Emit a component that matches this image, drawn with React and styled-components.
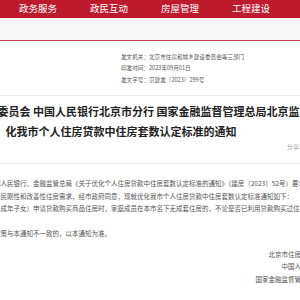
import React from 'react'
import styled, { createGlobalStyle } from 'styled-components';

const Global = createGlobalStyle`
  html, body {
    margin: 0;
    padding: 0;
    overflow: hidden;
    background: #fff;
  }
  body {
    font-family: "Noto Sans CJK SC", "Noto Sans", sans-serif;
  }
  #root {
    width: 300px;
    height: 300px;
    overflow: hidden;
  }
`

const navItems = ['政务服务', '政民互动', '房屋管理', '工程建设']

const metaItems = [
  ['发文机关', '北京市住房和城乡建设委员会等三部门'],
  ['印发时间', '2023年09月01日'],
  ['发文字号', '京建发〔2023〕299号'],
]

// the lines as they wrap in the page column
const lines = [
  { indent: true, text: '认真贯彻落实住房和城乡建设部、中国人民银行、金融监管总局《关于优化个人住房贷款中住房套数认定标准的通知》（建房〔2023〕52号）要求，为' },
  { text: '促进房地产市场平稳健康发展，更好满足居民刚性和改善性住房需求，经市政府同意，现就优化我市个人住房贷款中住房套数认定标准通知如下：' },
  { indent: true, text: '一、居民家庭（包括借款人、配偶及未成年子女）申请贷款购买商品住房时，家庭成员在本市名下无成套住房的，不论是否已利用贷款购买过住房，银行业金融机' },
  { text: '构均按首套住房执行住房信贷政策。' },
  { indent: true, text: '二、本通知自印发之日起施行。此前政策与本通知不一致的，以本通知为准。' },
]

const signers = [
  '北京市住房和城乡建设委员会',
  '中国人民银行北京市分行',
  '国家金融监督管理总局北京监管局',
]

const App = () => {
  return (
    <>
      <Global />
      <NavBar>
        {navItems.map(item => <NavItem key={item}>{item}</NavItem>)}
      </NavBar>
      <SubBar />
      <Article>
        <Meta>
          {metaItems.map(([label, value]) => (
            <MetaLine key={label}>{label}：{value}</MetaLine>
          ))}
        </Meta>
        <Title>
          北京市住房和城乡建设委员会 中国人民银行北京市分行 国家金融监督管理总局北京监管局关于优化我市个人住房贷款中住房套数认定标准的通知
        </Title>
        <ShareRow>分享到：<span>微信 微博</span></ShareRow>
        <Body>
          {lines.map(l => <Line key={l.text} $indent={l.indent}>{l.text}</Line>)}
          <Signers>
            {signers.map(s => <Signer key={s}>{s}</Signer>)}
          </Signers>
        </Body>
      </Article>
    </>
  )
}

export default App

const NavBar = styled.div`
  height: 18px;
  background: #be1a2e;
  display: flex;
  align-items: center;
  gap: 33px;
  padding-left: 19px;
`

const NavItem = styled.div`
  color: #fff;
  font-size: 9.5px;
  line-height: 1;
  white-space: nowrap;
`

const SubBar = styled.div`
  height: 22px;
  background: #f6f6f6;
  border-bottom: 1px solid #c9404f;
`

const Article = styled.div`
  width: 722px;
  margin-left: -240px;
`

const Meta = styled.div`
  padding: 11px 0 9px 361px;
  border-bottom: 1px solid #eeeeee;
`

const MetaLine = styled.div`
  font-size: 5.6px;
  line-height: 11.4px;
  color: #555;
  white-space: nowrap;
`

const Title = styled.h1`
  margin: 0;
  font-size: 11px;
  line-height: 20px;
  font-weight: 700;
  color: #222;
  text-align: center;
  padding: 5px 124px 0;
`

const ShareRow = styled.div`
  padding: 1px 0 0 527px;
  height: 21px;
  font-size: 6px;
  line-height: 10px;
  color: #999;
  border-bottom: 1px solid #eeeeee;
  white-space: nowrap;
`

const Body = styled.div`
  padding: 13px 129px 0 117px;
`

const Line = styled.div`
  font-size: 6.5px;
  line-height: 12.5px;
  color: #555;
  white-space: nowrap;
  text-indent: ${p => (p.$indent ? '2em' : '0')};
`

const Signers = styled.div`
  margin-top: 8px;
  text-align: right;
`

const Signer = styled.div`
  font-size: 6.5px;
  line-height: 12.7px;
  color: #555;
`
